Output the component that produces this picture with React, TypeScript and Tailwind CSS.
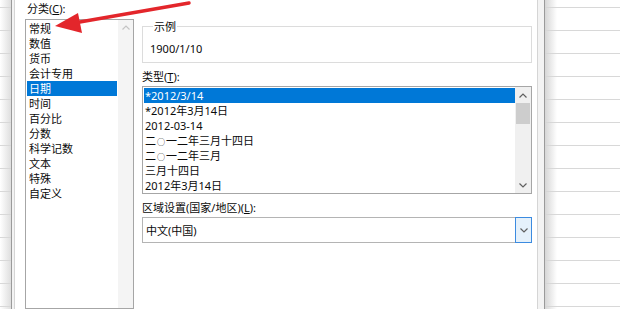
import React from 'react';

const categories = ['常规', '数值', '货币', '会计专用', '日期', '时间', '百分比', '分数', '科学记数', '文本', '特殊', '自定义'];
const types = ['*2012/3/14', '*2012年3月14日', '2012-03-14', '二○一二年三月十四日', '二○一二年三月', '三月十四日', '2012年3月14日'];

const font = "font-['Noto_Sans','Noto_Sans_CJK_SC',sans-serif]";

// small scroll / dropdown chevrons
const Chevron = ({ up = false, color = '#606060' }: { up?: boolean; color?: string }) => (
  <svg width="8" height="5" viewBox="0 0 8 5" fill="none">
    <polyline points={up ? '0.5,4.5 4,1 7.5,4.5' : '0.5,0.5 4,4 7.5,0.5'} stroke={color} strokeWidth="1.2" />
  </svg>
);

// the ○ in the chinese numerals is drawn small in the dialog font
const TypeText = ({ text }: { text: string }) => (
  <>
    {text.split('○').map((part, i) => (
      <React.Fragment key={i}>
        {i > 0 && (
          <span className="inline-block w-[10px] text-center text-[8px] leading-[15px] align-top translate-y-[1px]">○</span>
        )}
        {part}
      </React.Fragment>
    ))}
  </>
);

export default function App() {
  return (
    <div className={`relative w-[620px] h-[309px] overflow-hidden flex bg-white text-[11px] leading-[15px] text-[#0a0a0a] ${font}`}>
      {/* sheet behind the dialog, left */}
      <div className="w-[11px] shrink-0 bg-[image:repeating-linear-gradient(to_bottom,transparent_0,transparent_7px,#d8d8d8_7px,#d8d8d8_8px,transparent_8px,transparent_23px),linear-gradient(to_right,#ffffff,#dedede)]" />

      {/* dialog */}
      <div className="flex shrink-0 border-l border-r border-[#9a9a9a] bg-[#f3f3f3] pl-[2px] pr-[6px]">
        {/* tab page */}
        <div className="flex gap-[8px] w-[524px] bg-white border-l border-r border-[#d5d5d5] pl-[10px] pr-[5px]">
          {/* category column */}
          <div className="w-[109px] flex flex-col">
            <div className="h-[18px] leading-[18px] ml-[2px]">
              分类(<span className="underline">C</span>):
            </div>
            <div className="mt-[1px] flex-1 flex border border-[#a6a6a6] bg-white">
              <div className="flex-1 pt-[1px]">
                {categories.map(c => (
                  <div
                    key={c}
                    className={`h-[15px] ml-[1px] mr-[1px] pl-[2px] leading-[15px] ${c === '日期' ? 'bg-[#0078d7] text-white' : ''}`}
                  >
                    {c}
                  </div>
                ))}
              </div>
              <div className="w-[15px] bg-[#f4f4f4] flex flex-col items-center">
                <div className="h-[15px] flex items-center justify-center">
                  <Chevron up color="#c4c4c4" />
                </div>
              </div>
            </div>
          </div>

          {/* right column */}
          <div className="w-[390px] flex flex-col pt-[19px]">
            <fieldset className="border border-[#dcdcdc] pl-[7px] pt-[7px] pb-[6px]">
              <legend className="ml-[3px] px-[1px] leading-[15px]">示例</legend>
              <div className="h-[15px]">1900/1/10</div>
            </fieldset>

            <div className="mt-[6px] h-[15px]">
              类型(<span className="underline">T</span>):
            </div>
            <div className="mt-[2px] flex border border-[#a6a6a6] bg-white">
              <div className="flex-1 pt-[1px]">
                {types.map((t, i) => (
                  <div
                    key={t}
                    className={`h-[15px] ml-[1px] pl-[1px] leading-[15px] whitespace-nowrap ${i === 0 ? 'bg-[#0078d7] text-white' : ''}`}
                  >
                    <TypeText text={t} />
                  </div>
                ))}
              </div>
              <div className="w-[16px] bg-[#f0f0f0] flex flex-col">
                <div className="h-[16px] flex items-center justify-center">
                  <Chevron up />
                </div>
                <div className="mx-[1px] h-[21px] bg-[#cdcdcd]" />
                <div className="flex-1" />
                <div className="h-[16px] flex items-center justify-center">
                  <Chevron />
                </div>
              </div>
            </div>

            <div className="mt-[6px] h-[15px]">
              区域设置(国家/地区)(<span className="underline">L</span>):
            </div>
            <div className="mt-[2px] h-[26px] flex border border-[#b4b4b4] bg-white">
              <div className="flex-1 pl-[3px] flex items-center">中文(中国)</div>
              <div className="w-[17px] -my-[1px] -mr-[1px] border border-[#3c8be0] bg-[#e5f1fb] flex items-center justify-center">
                <Chevron />
              </div>
            </div>
          </div>
        </div>
      </div>

      {/* sheet behind the dialog, right */}
      <div className="flex-1 bg-[image:linear-gradient(to_right,#d6d6d6,rgba(255,255,255,0)_12px),repeating-linear-gradient(to_bottom,transparent_0,transparent_7px,#d8d8d8_7px,#d8d8d8_8px,transparent_8px,transparent_23px)]" />

      {/* red annotation arrow */}
      <svg className="absolute left-0 top-0 pointer-events-none" width="620" height="309" viewBox="0 0 620 309">
        <line x1="189" y1="3" x2="74" y2="23" stroke="#e3262b" strokeWidth="3.5" strokeLinecap="round" />
        <polygon points="55,26 78,13 82,33" fill="#e3262b" />
      </svg>
    </div>
  );
}
